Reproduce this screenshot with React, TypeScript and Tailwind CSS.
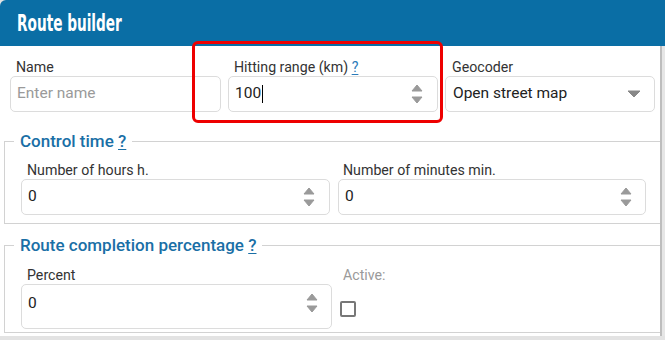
import React from "react";

const Spinner = () => (
  <svg width="12" height="20" viewBox="0 0 12 20" className="shrink-0">
    <path d="M6 1 L11 7 L1 7 Z" fill="#9a9a9a" stroke="#9a9a9a" strokeWidth="1" strokeLinejoin="round" />
    <path d="M1 13 L11 13 L6 19 Z" fill="#9a9a9a" stroke="#9a9a9a" strokeWidth="1" strokeLinejoin="round" />
  </svg>
);

const Caret = () => (
  <svg width="14" height="8" viewBox="0 0 14 8" className="shrink-0">
    <path d="M1 1 L13 1 L7 7 Z" fill="#888" stroke="#888" strokeWidth="1" strokeLinejoin="round" />
  </svg>
);

const Help = () => (
  <span className="text-[#2b7bb9] underline underline-offset-2 decoration-1">?</span>
);

export default function App() {
  return (
    <div
      className="w-[665px] h-[340px] bg-[#e3e3e3] overflow-hidden relative"
      style={{ fontFamily: "Roboto, 'Noto Sans', sans-serif" }}
    >
      <div className="h-[46px] bg-[#0a6ea5] rounded-tl-[6px] flex items-center pl-[17px]">
        <span
          className="text-white font-bold text-[23px] leading-none inline-block origin-left scale-x-[0.66]"
          style={{ fontFamily: "'Liberation Sans Narrow', 'DejaVu Sans Condensed', sans-serif" }}
        >
          Route builder
        </span>
      </div>
      <div className="flex h-[290px]">
        <div className="w-[660px] bg-white overflow-hidden">
          {/* Row 1 */}
          <div className="flex gap-[7px] pl-[10px] pt-[12px]">
            <div className="w-[211px]">
              <div className="h-[18px] leading-[18px] text-[14.2px] text-[#333] pl-[6px]">Name</div>
              <div className="h-[36px] border border-[#dcdcdc] rounded-[5px] flex items-center px-[6px] text-[15.5px] text-[#9a9a9a]">
                Enter name
              </div>
            </div>
            <div className="w-[210px]">
              <div className="h-[18px] leading-[18px] text-[14.2px] text-[#333] pl-[6px]">
                Hitting range (km) <Help />
              </div>
              <div className="h-[36px] border border-[#dcdcdc] rounded-[5px] flex items-center pl-[6px] pr-[14px] text-[15.5px] text-[#222]">
                <span className="flex-1 flex items-center">
                  100<span className="inline-block w-px h-[18px] bg-black ml-px" />
                </span>
                <Spinner />
              </div>
            </div>
            <div className="w-[210px]">
              <div className="h-[18px] leading-[18px] text-[14.2px] text-[#333] pl-[7px]">Geocoder</div>
              <div className="h-[36px] border border-[#dcdcdc] rounded-[5px] flex items-center pl-[7px] pr-[13px] text-[15.5px] text-[#222]">
                <span className="flex-1">Open street map</span>
                <Caret />
              </div>
            </div>
          </div>

          {/* Control time */}
          <fieldset className="mt-[19px] ml-[4px] w-[659px] border border-[#d2d2d2]">
            <legend className="ml-[9px] px-[6px] h-[20px] leading-[20px] text-[17px] font-medium text-[#1a6fa6]">
              Control time <span className="underline underline-offset-2 decoration-1">?</span>
            </legend>
            <div className="flex gap-[8px] pl-[16px] pt-[10px] pb-[8px]">
              <div className="w-[309px]">
                <div className="h-[18px] leading-[18px] text-[14.2px] text-[#333] pl-[6px]">Number of hours h.</div>
                <div className="h-[36px] border border-[#dcdcdc] rounded-[5px] flex items-center pl-[6px] pr-[14px] text-[15.5px] text-[#222]">
                  <span className="flex-1">0</span>
                  <Spinner />
                </div>
              </div>
              <div className="w-[308px]">
                <div className="h-[18px] leading-[18px] text-[14.2px] text-[#333] pl-[5px]">Number of minutes min.</div>
                <div className="h-[36px] border border-[#dcdcdc] rounded-[5px] flex items-center pl-[6px] pr-[13px] text-[15.5px] text-[#222]">
                  <span className="flex-1">0</span>
                  <Spinner />
                </div>
              </div>
            </div>
          </fieldset>

          {/* Route completion */}
          <fieldset className="mt-[11px] ml-[4px] w-[659px] border border-[#d2d2d2]">
            <legend className="ml-[9px] px-[6px] h-[20px] leading-[20px] text-[17px] font-medium text-[#1a6fa6]">
              Route completion percentage <span className="underline underline-offset-2 decoration-1">?</span>
            </legend>
            <div className="flex gap-[8px] pl-[16px] pt-[11px] pb-[3px]">
              <div className="w-[311px]">
                <div className="h-[18px] leading-[18px] text-[14.2px] text-[#333] pl-[6px]">Percent</div>
                <div className="h-[45px] border border-[#dcdcdc] rounded-[5px] flex items-start pt-[8px] pl-[6px] pr-[13px] text-[15.5px] text-[#222]">
                  <span className="flex-1 leading-[18px] pt-[1px]">0</span>
                  <Spinner />
                </div>
              </div>
              <div>
                <div className="h-[18px] leading-[18px] text-[14.2px] text-[#9a9a9a] pl-[3px]">Active:</div>
                <div className="mt-[17px] w-[16px] h-[16px] border-2 border-[#777] rounded-[2px]" />
              </div>
            </div>
          </fieldset>
        </div>
        <div className="w-[2px] bg-[#bdbdbd]" />
        <div className="flex-1 bg-[#e6e6e6]" />
      </div>

      {/* Red highlight */}
      <div className="absolute left-[192px] top-[41px] w-[251px] h-[82px] border-[3px] border-[#ee0000] rounded-[6px]" />
    </div>
  );
}
